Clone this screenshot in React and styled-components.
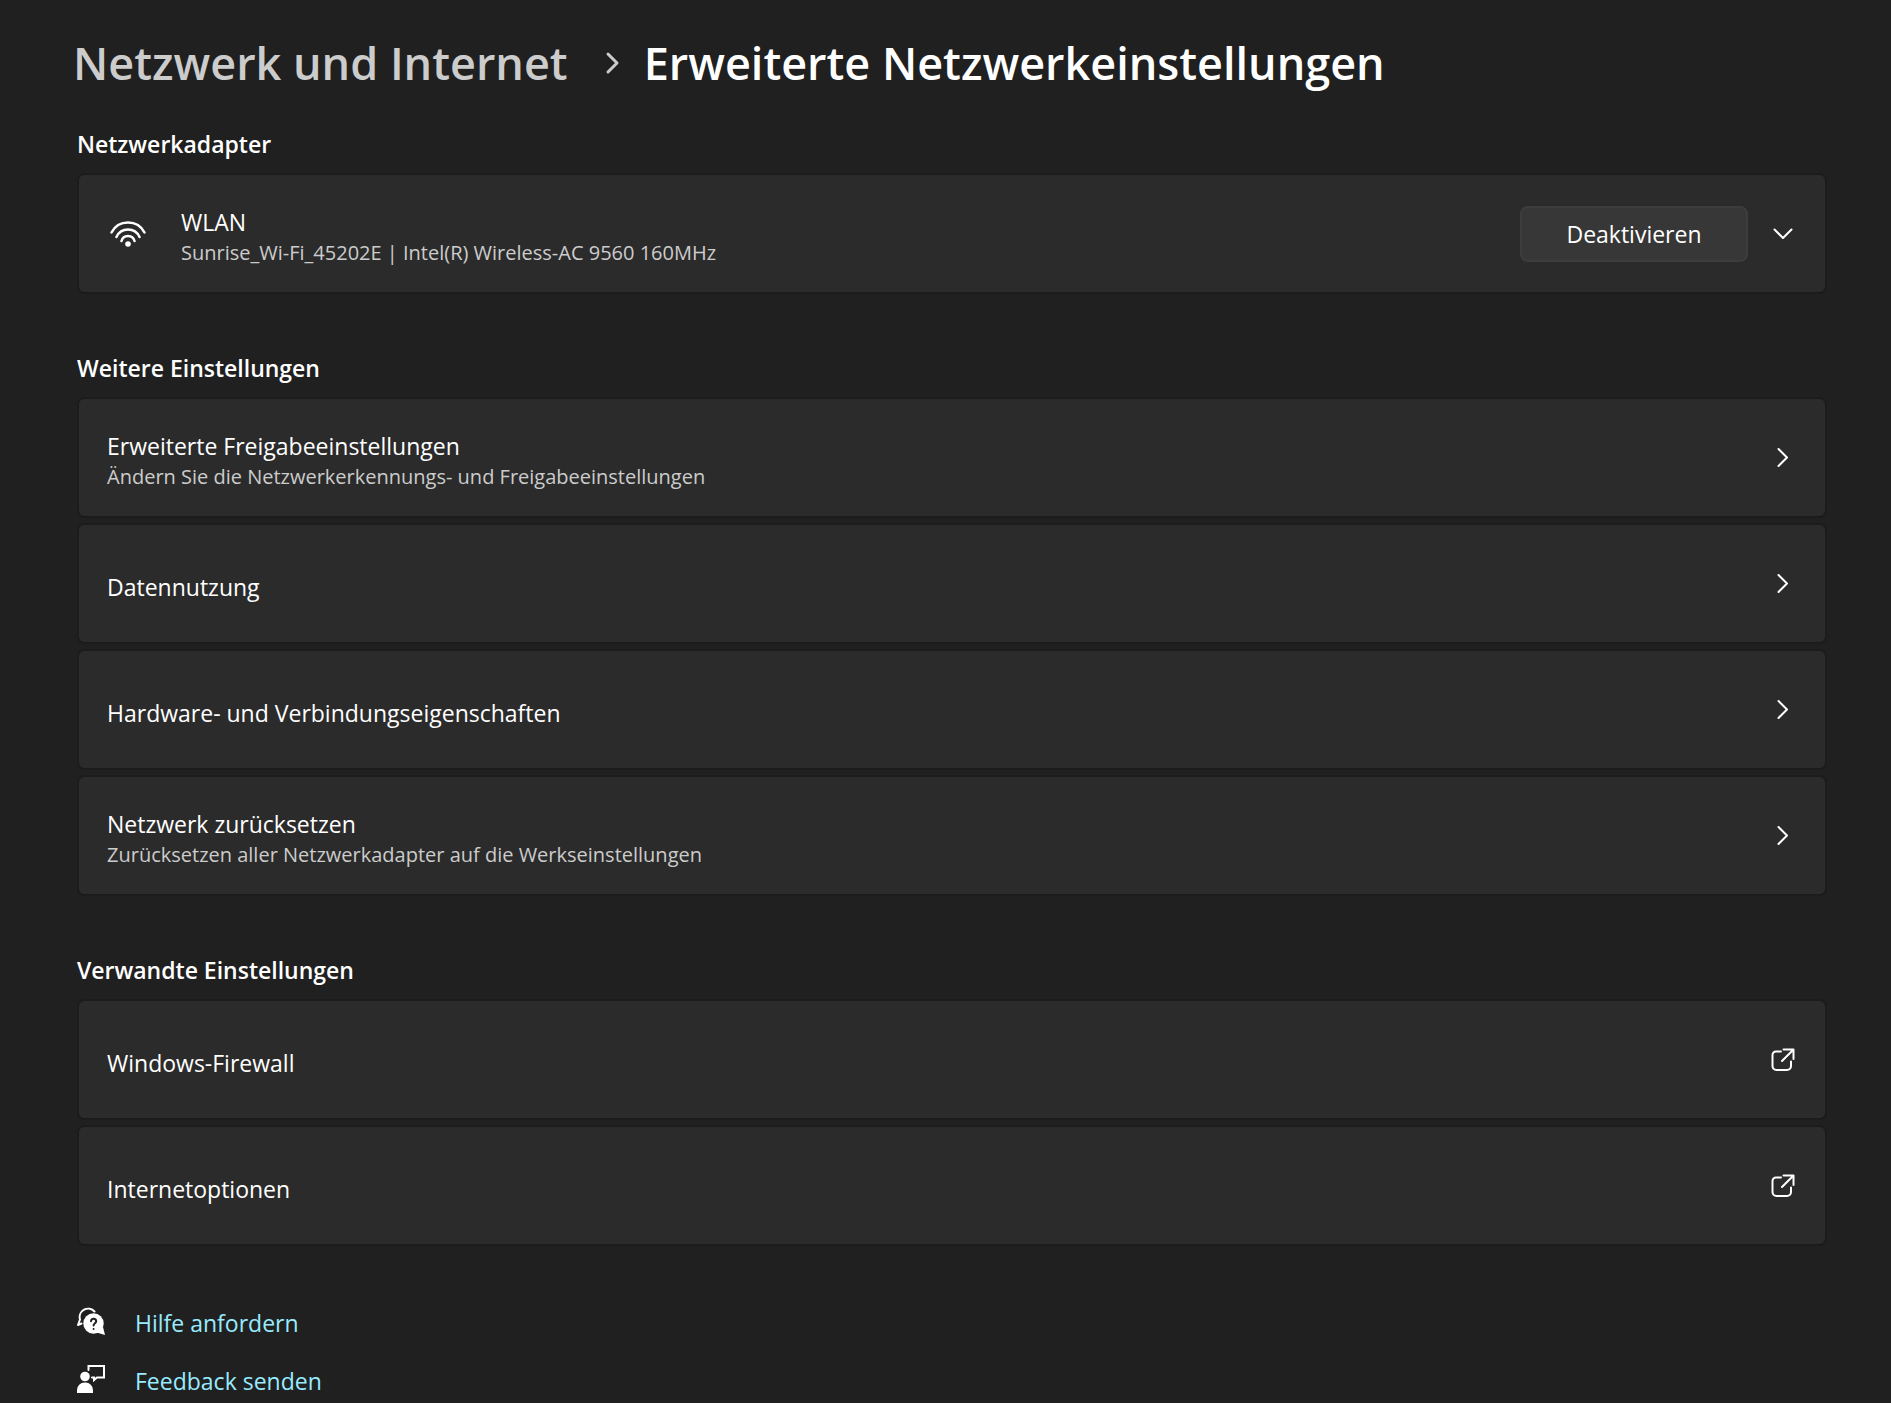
import React from "react";
import styled, { createGlobalStyle } from "styled-components";

const GlobalStyle = createGlobalStyle`
  * { box-sizing: border-box; }
  body {
    margin: 0;
    background: #202020;
    color: #ffffff;
    font-family: "Open Sans", "Noto Sans", sans-serif;
    font-size: 23px;
    line-height: 32px;
  }
`;

const Page = styled.main`
  padding: 30px 64px 8px 77px;
`;

const Breadcrumb = styled.nav`
  display: flex;
  align-items: center;
  gap: 24px;
  margin: 0 0 30px -4px;
  font-size: 45px;
  line-height: 66px;
  font-weight: 600;
`;

const Crumb = styled.a`
  margin-right: 12px;
  color: #cccccc;
  text-decoration: none;
`;

const PageTitle = styled.h1`
  margin: 0;
  font: inherit;
`;

const Section = styled.section`
  display: flex;
  flex-direction: column;
  gap: 5px;
  margin-bottom: 56px;
`;

const SectionTitle = styled.h2`
  margin: 0 0 6px;
  font-size: 23px;
  line-height: 36px;
  font-weight: 600;
`;

const Card = styled.div`
  display: flex;
  align-items: center;
  min-height: 121px;
  padding: 0 26px 0 28px;
  border: 2px solid #1c1c1c;
  border-radius: 7px;
  background: #2b2b2b;
  background-clip: padding-box;
  color: inherit;
  text-decoration: none;
`;

const CardText = styled.div`
  flex: 1;
  padding-top: 6px;
`;

const CardTitle = styled.div`
  font-size: 23px;
  line-height: 32px;
`;

const CardNote = styled.div`
  color: #cccccc;
  font-size: 20px;
  line-height: 30px;
`;

const LeadIcon = styled.div`
  width: 74px;
  padding-left: 3px;
`;

const Icon = styled.svg`
  display: block;
  flex: none;
  fill: none;
  stroke: currentColor;
  stroke-width: ${(p) => p.$weight || 2};
  stroke-linecap: round;
  stroke-linejoin: round;
`;

const ActionButton = styled.button`
  min-width: 228px;
  height: 56px;
  margin-right: 19px;
  border: 2px solid #3d3d3d;
  border-radius: 8px;
  background: #373737;
  color: inherit;
  font: inherit;
`;

const ExpandButton = styled.button`
  padding: 0;
  border: 0;
  background: none;
  color: inherit;
`;

const LinkList = styled.div`
  display: flex;
  flex-direction: column;
  gap: 20px;
`;

const LinkRow = styled.a`
  display: flex;
  align-items: center;
  gap: 30px;
  height: 38px;
  color: #99ebff;
  text-decoration: none;

  svg { color: #ffffff; }
`;

const LinkLabel = styled.span`
  padding-top: 3px;
`;

const CrumbChevron = () => (
  <Icon $weight={3} width="16" height="32" viewBox="0 0 16 32" aria-hidden="true" color="#cccccc">
    <path d="M4 7l9 9-9 9" />
  </Icon>
);

const ChevronRight = () => (
  <Icon width="32" height="32" viewBox="0 0 32 32" aria-hidden="true">
    <path d="M11.5 7l8.500 8.500-8.500 8.500" />
  </Icon>
);

const ChevronDown = () => (
  <Icon width="32" height="32" viewBox="0 0 32 32" aria-hidden="true">
    <path d="M7.500 11.500l8.500 8.500 8.500-8.500" />
  </Icon>
);

const External = () => (
  <Icon width="32" height="32" viewBox="0 0 32 32" aria-hidden="true">
    <path d="M14 7.500H9A3.500 3.500 0 0 0 5.500 11V22A4 4 0 0 0 9.500 26H20A4 4 0 0 0 24 22V17.500M16.500 5.500H26.500V15M26 6L15 17" />
  </Icon>
);

const Wifi = () => (
  <Icon $weight={2.5} width="36" height="32" viewBox="0 0 36 32" aria-hidden="true">
    <path d="M1.500 14.500A18.600 18.600 0 0 1 34.500 14.500M6.500 19A12.600 12.600 0 0 1 29.500 19M11.500 23A6.700 6.700 0 0 1 24.500 23" />
    <circle cx="18" cy="26" r="2.800" fill="currentColor" stroke="none" />
  </Icon>
);

const Help = () => (
  <Icon width="28" height="28" viewBox="0 0 28 28" aria-hidden="true">
    <path d="M17.500 4.500A8.500 8.500 0 0 0 3 12.500L1 18L4.500 16.500" />
    <circle cx="16.500" cy="16.500" r="10.200" fill="currentColor" stroke="none" />
    <path d="M26 20L28 28L19.500 25.500z" fill="currentColor" stroke="none" />
    <path d="M14 14.300c0-3.500 5.200-3.200 5.200 0 0 2-2.600 2-2.600 4.200M16.600 22v.1" stroke="#202020" />
  </Icon>
);

const Feedback = () => (
  <Icon width="28" height="28" viewBox="0 0 28 28" aria-hidden="true">
    <path d="M11.500 5V1H27V12.500H20L17 15V12.500H15" strokeLinejoin="miter" />
    <circle cx="8" cy="11.500" r="4.800" fill="currentColor" stroke="none" />
    <path d="M0 28V25a7.500 7.500 0 0 1 7.500-7.500h1a7.500 7.500 0 0 1 7.500 7.500v3z" fill="currentColor" stroke="none" />
  </Icon>
);

const CardLink = ({ title, note, icon }) => (
  <Card as="a" href="#">
    <CardText>
      <CardTitle>{title}</CardTitle>
      {note && <CardNote>{note}</CardNote>}
    </CardText>
    {icon}
  </Card>
);

export default function App() {
  return (
    <Page>
      <GlobalStyle />
      <Breadcrumb aria-label="Navigationspfad">
        <Crumb href="#">Netzwerk und Internet</Crumb>
        <CrumbChevron />
        <PageTitle>Erweiterte Netzwerkeinstellungen</PageTitle>
      </Breadcrumb>

      <Section>
        <SectionTitle>Netzwerkadapter</SectionTitle>
        <Card>
          <LeadIcon><Wifi /></LeadIcon>
          <CardText>
            <CardTitle>WLAN</CardTitle>
            <CardNote>Sunrise_Wi-Fi_45202E | Intel(R) Wireless-AC 9560 160MHz</CardNote>
          </CardText>
          <ActionButton type="button">Deaktivieren</ActionButton>
          <ExpandButton type="button" aria-label="WLAN erweitern"><ChevronDown /></ExpandButton>
        </Card>
      </Section>

      <Section>
        <SectionTitle>Weitere Einstellungen</SectionTitle>
        <CardLink title="Erweiterte Freigabeeinstellungen" note="Ändern Sie die Netzwerkerkennungs- und Freigabeeinstellungen" icon={<ChevronRight />} />
        <CardLink title="Datennutzung" icon={<ChevronRight />} />
        <CardLink title="Hardware- und Verbindungseigenschaften" icon={<ChevronRight />} />
        <CardLink title="Netzwerk zurücksetzen" note="Zurücksetzen aller Netzwerkadapter auf die Werkseinstellungen" icon={<ChevronRight />} />
      </Section>

      <Section>
        <SectionTitle>Verwandte Einstellungen</SectionTitle>
        <CardLink title="Windows-Firewall" icon={<External />} />
        <CardLink title="Internetoptionen" icon={<External />} />
      </Section>

      <LinkList>
        <LinkRow href="#"><Help /><LinkLabel>Hilfe anfordern</LinkLabel></LinkRow>
        <LinkRow href="#"><Feedback /><LinkLabel>Feedback senden</LinkLabel></LinkRow>
      </LinkList>
    </Page>
  );
}
